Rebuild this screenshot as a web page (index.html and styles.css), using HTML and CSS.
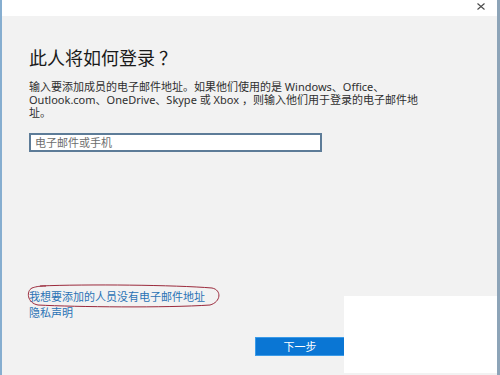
FILE: index.html
```html
<!DOCTYPE html>
<html lang="zh-CN">
<head>
    <meta charset="UTF-8">
    <meta name="viewport" content="width=device-width, initial-scale=1.0">
    <title>添加用户</title>
    <link rel="stylesheet" href="styles.css">
</head>
<body>
    <div class="window">
        <div class="titlebar">
            <svg class="close" width="8" height="7" viewBox="0 0 8 7">
                <path d="M0.5 0.5 L7.5 6.5 M7.5 0.5 L0.5 6.5" stroke="#4a4a4a" stroke-width="1.1"/>
            </svg>
        </div>
        <main class="content">
            <h1 class="heading">此人将如何登录<span class="qmark">？</span></h1>
            <p class="intro">输入要添加成员的电子邮件地址。如果他们使用的是 Windows、Office、Outlook.com、OneDrive、Skype 或 Xbox ，则输入他们用于登录的电子邮件地址。</p>
            <input class="email" type="text" placeholder="电子邮件或手机">

            <div class="links">
                <a class="link" href="#">我想要添加的人员没有电子邮件地址</a>
                <a class="link" href="#">隐私声明</a>
                <!-- hand-drawn annotation around the first link -->
                <svg class="mark" width="196" height="24" viewBox="0 0 196 24">
                    <path d="M14 2 C60 0 150 1 186 4 C196 6 195 18 184 21 C140 24 50 23 12 21 C1 19 0 7 6 4 C9 3 12 2 20 2" fill="none" stroke="#9b2a3c" stroke-width="1"/>
                </svg>
            </div>

            <div class="actions">
                <button class="btn-next" type="button">下一步</button>
            </div>
        </main>
        <div class="cover"></div>
    </div>
</body>
</html>
```

FILE: styles.css
```css
body {
    margin: 0;
    padding: 0;
    font-family: 'Noto Sans', 'Noto Sans CJK SC', sans-serif;
    background-color: #f2f2f2;
}
.window {
    position: relative;
    width: 500px;
    height: 375px;
    box-sizing: border-box;
    background-color: #f2f2f2;
    border-left: 2px solid #86aed0;
    border-right: 3px solid #8da4b8;
    overflow: hidden;
}
.titlebar {
    height: 16px;
    background-color: #fff;
    display: flex;
    justify-content: flex-end;
    align-items: flex-start;
}
.close {
    margin: 3px 12px 0 0;
}
.content {
    padding: 0 27px;
}
.heading {
    margin: 30px 0 0;
    font-size: 18px;
    line-height: 24px;
    font-weight: normal;
    color: #1a1a1a;
}
.qmark {
    margin-left: 4px;
}
.intro {
    margin: 10px 0 0;
    width: 390px;
    font-size: 11px;
    line-height: 13px;
    color: #2f2f2f;
}
.email {
    display: block;
    margin-top: 14px;
    width: 293px;
    height: 19px;
    box-sizing: border-box;
    border: 2px solid #5d7c98;
    background-color: #fff;
    padding: 0 4px;
    font-family: inherit;
    font-size: 11px;
    color: #333;
    outline: none;
}
.email::placeholder {
    color: #6d6d6d;
}
.links {
    position: relative;
    margin-top: 137px;
    display: flex;
    flex-direction: column;
}
.link {
    font-size: 11px;
    line-height: 16px;
    color: #2a72b5;
    text-decoration: none;
    align-self: flex-start;
}
.mark {
    position: absolute;
    left: -3px;
    top: -5px;
}
.actions {
    margin-top: 13px;
    padding-left: 226px;
}
.btn-next {
    width: 90px;
    height: 19px;
    border: 1px solid #3b9be8;
    background-color: #0a76d4;
    color: #fff;
    font-family: inherit;
    font-size: 11px;
    line-height: 15px;
    padding: 0;
}
.cover {
    position: absolute;
    left: 342px;
    top: 296px;
    width: 153px;
    height: 77px;
    background-color: #fff;
}
```
